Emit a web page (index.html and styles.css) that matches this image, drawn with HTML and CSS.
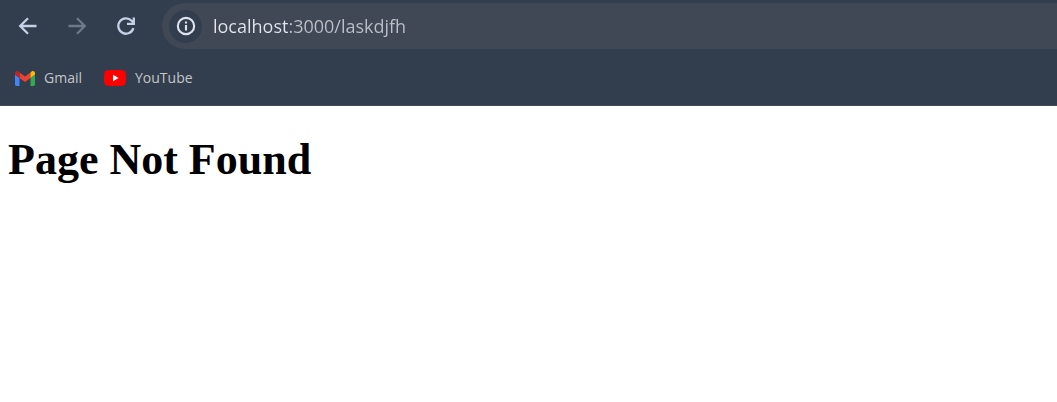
FILE: index.html
```html
<!DOCTYPE html>
<html lang="en">
<head>
<meta charset="utf-8">
<meta name="viewport" content="width=device-width, initial-scale=1">
<title>Page Not Found</title>
<link rel="stylesheet" href="styles.css">
</head>
<body>
<header class="browser">
  <div class="toolbar">
    <nav class="controls" aria-label="History">
      <button class="control" type="button" aria-label="Back">
        <svg class="icon" viewBox="0 0 24 24"><path d="M20.500 12H4.500M12 4.200 4.200 12l7.800 7.800"/></svg>
      </button>
      <button class="control" type="button" aria-label="Forward" disabled>
        <svg class="icon" viewBox="0 0 24 24"><path d="M3.500 12h16M12 4.200l7.800 7.800-7.800 7.800"/></svg>
      </button>
      <button class="control" type="button" aria-label="Reload">
        <svg class="icon" viewBox="0 0 24 24"><path d="M19.400 14.200A7.700 7.700 0 1 1 17.600 6.700L19.600 8.800M19.800 3.400v6.400H13"/></svg>
      </button>
    </nav>
    <div class="omnibox">
      <button class="site-info" type="button" aria-label="View site information">
        <svg class="icon icon-info" viewBox="0 0 24 24"><circle cx="12" cy="12" r="8.900"/><path d="M12 11v5.800M12 7v2.200"/></svg>
      </button>
      <input class="address" type="text" aria-label="Address" value="localhost:3000/laskdjfh" spellcheck="false">
    </div>
  </div>
  <nav class="bookmarks" aria-label="Bookmarks">
    <a class="bookmark" href="#gmail">
      <svg class="favicon gmail" viewBox="0 0 20 15"><path fill="#4285f4" d="M0 3.500l4.500 3.400V15H1.400A1.400 1.400 0 0 1 0 13.600z"/><path fill="#34a853" d="M20 3.500l-4.500 3.400V15h3.100a1.400 1.400 0 0 0 1.400-1.400z"/><path fill="#ea4335" d="M4.500 1.400L10 5.600l5.500-4.200v5.500L10 11 4.500 6.900z"/><path fill="#c5221f" d="M0 2.100C0 .3 2-.6 3.400.5l1.100.9v5.500L0 3.500z"/><path fill="#fbbc04" d="M20 2.100c0-1.800-2-2.700-3.400-1.600l-1.100.9v5.500L20 3.500z"/></svg>
      <span>Gmail</span>
    </a>
    <a class="bookmark" href="#youtube">
      <svg class="favicon youtube" viewBox="0 0 22 16"><path fill="#f00" d="M11 0c3 0 6.500.1 8.600.6 1 .2 1.700.9 1.900 1.900.6 3 .6 8 0 11-.2 1-.9 1.700-1.900 1.900-4.200.8-13 .8-17.200 0-1-.2-1.700-.9-1.900-1.900-.6-3-.6-8 0-11C.7 1.500 1.400.8 2.400.6 4.500.1 8 0 11 0z"/><path fill="#fff" d="M9 4.700v6.600L14.600 8z"/></svg>
      <span>YouTube</span>
    </a>
  </nav>
</header>
<main class="page">
  <h1 class="title">Page Not Found</h1>
</main>
</body>
</html>
```
FILE: styles.css
```css
* {
  box-sizing: border-box;
}

body {
  margin: 0;
  background: #fff;
  font-family: "Open Sans", "Noto Sans", sans-serif;
}

.browser {
  background: #323d4d;
  border-bottom: 1px solid #484b52;
}

.toolbar {
  display: flex;
  align-items: center;
  padding: 3px 0 0 12px;
}

.controls {
  display: flex;
  gap: 17px;
  margin-right: 20px;
}

.control,
.site-info {
  display: grid;
  place-items: center;
  width: 32px;
  height: 32px;
  padding: 0;
  border: 0;
  border-radius: 50%;
  background: none;
  color: #c5d0e6;
}

.control:disabled {
  color: #707987;
}

.icon {
  width: 24px;
  height: 24px;
  fill: none;
  stroke: currentColor;
  stroke-width: 2.3;
}

.icon-info {
  width: 22px;
  height: 22px;
}

.omnibox {
  display: flex;
  flex: 1;
  align-items: center;
  gap: 11px;
  height: 46px;
  padding-left: 7px;
  border-radius: 23px 0 0 23px;
  background: #404856;
}

.site-info {
  width: 33px;
  height: 33px;
  background: #323d4d;
  color: #dfe3ee;
}

.address {
  flex: 1;
  min-width: 0;
  padding: 0;
  border: 0;
  outline: 0;
  background: linear-gradient(90deg, #e4e7ec 76px, #bcc0c7 76px);
  background-clip: text;
  -webkit-background-clip: text;
  color: transparent;
  caret-color: #fff;
  font: 18px/26px "Open Sans", "Noto Sans", sans-serif;
}

.bookmarks {
  display: flex;
  gap: 22px;
  padding: 19px 15px 17px;
}

.bookmark {
  display: flex;
  align-items: center;
  gap: 9px;
  color: #c3c6cb;
  font-size: 14px;
  line-height: 20px;
  text-decoration: none;
}

.gmail {
  width: 20px;
  height: 15px;
}

.youtube {
  width: 22px;
  height: 16px;
}

.page {
  padding: 28px 8px;
}

.title {
  margin: 0;
  font: bold 44px/52px "Liberation Serif", "Times New Roman", serif;
}
```
